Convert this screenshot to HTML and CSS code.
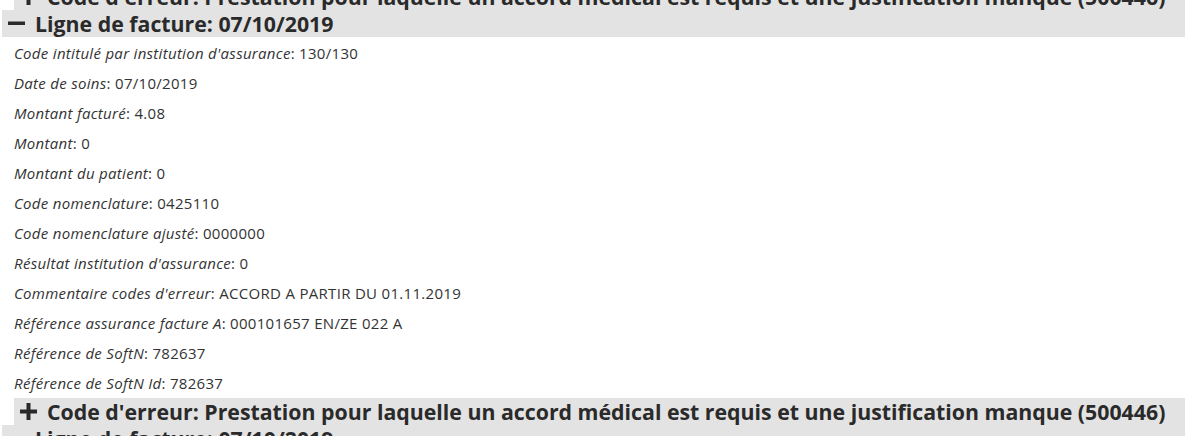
FILE: index.html
```html
<!DOCTYPE html>
<html lang="fr">

<head>
  <meta charset="UTF-8" />
  <title>Facture</title>
  <link rel="stylesheet" href="styles.css">
</head>

<body>
  <div class="page">

    <div class="error">
      <h3 class="error-head">
        <svg class="icon" viewBox="0 0 17 17"><rect x="0" y="6.5" width="17" height="4" /><rect x="6.5" y="0" width="4" height="17" /></svg>
        Code d'erreur: Prestation pour laquelle un accord médical est requis et une justification manque (500446)
      </h3>
    </div>

    <div class="line">
      <h3 class="line-head">
        <svg class="icon" viewBox="0 0 17 17"><rect x="0" y="6.5" width="17" height="3.5" /></svg>
        Ligne de facture: 07/10/2019
      </h3>
      <div class="line-body">
        <p><i>Code intitulé par institution d'assurance</i>: 130/130</p>
        <p><i>Date de soins</i>: 07/10/2019</p>
        <p><i>Montant facturé</i>: 4.08</p>
        <p><i>Montant</i>: 0</p>
        <p><i>Montant du patient</i>: 0</p>
        <p><i>Code nomenclature</i>: 0425110</p>
        <p><i>Code nomenclature ajusté</i>: 0000000</p>
        <p><i>Résultat institution d'assurance</i>: 0</p>
        <p><i>Commentaire codes d'erreur</i>: ACCORD A PARTIR DU 01.11.2019</p>
        <p><i>Référence assurance facture A</i>: 000101657 EN/ZE 022 A</p>
        <p><i>Référence de SoftN</i>: 782637</p>
        <p><i>Référence de SoftN Id</i>: 782637</p>
      </div>
    </div>

    <div class="error">
      <h3 class="error-head">
        <svg class="icon" viewBox="0 0 17 17"><rect x="0" y="6.5" width="17" height="4" /><rect x="6.5" y="0" width="4" height="17" /></svg>
        Code d'erreur: Prestation pour laquelle un accord médical est requis et une justification manque (500446)
      </h3>
    </div>

    <div class="line">
      <h3 class="line-head">
        <svg class="icon" viewBox="0 0 17 17"><rect x="0" y="6.5" width="17" height="3.5" /></svg>
        Ligne de facture: 07/10/2019
      </h3>
    </div>

  </div>
</body>

</html>
```

FILE: styles.css
```css
:root {
  --head-bg: #e3e3e3;
  --head-color: #2a2a2a;
  --text-color: #333;
}

body {
  margin: 0;
  font-family: "Open Sans", "Noto Sans", sans-serif;
  color: var(--text-color);
  background: #fff;
  overflow: hidden;
}

.page {
  margin-top: -17px;
  padding-left: 2px;
}

h3 {
  margin: 0;
  display: flex;
  align-items: center;
  gap: 10px;
  height: 27px;
  padding-left: 6px;
  background-color: var(--head-bg);
  color: var(--head-color);
  font-size: 21.3px;
  font-weight: 700;
  white-space: nowrap;
}

.error-head {
  margin-left: 12px;
}

.icon {
  width: 17px;
  height: 17px;
  fill: var(--head-color);
  flex: none;
}

.line-body {
  padding: 1px 12px 0;
}

.line-body p {
  margin: 0;
  font-size: 15px;
  letter-spacing: 0.3px;
  line-height: 30px;
}
```
